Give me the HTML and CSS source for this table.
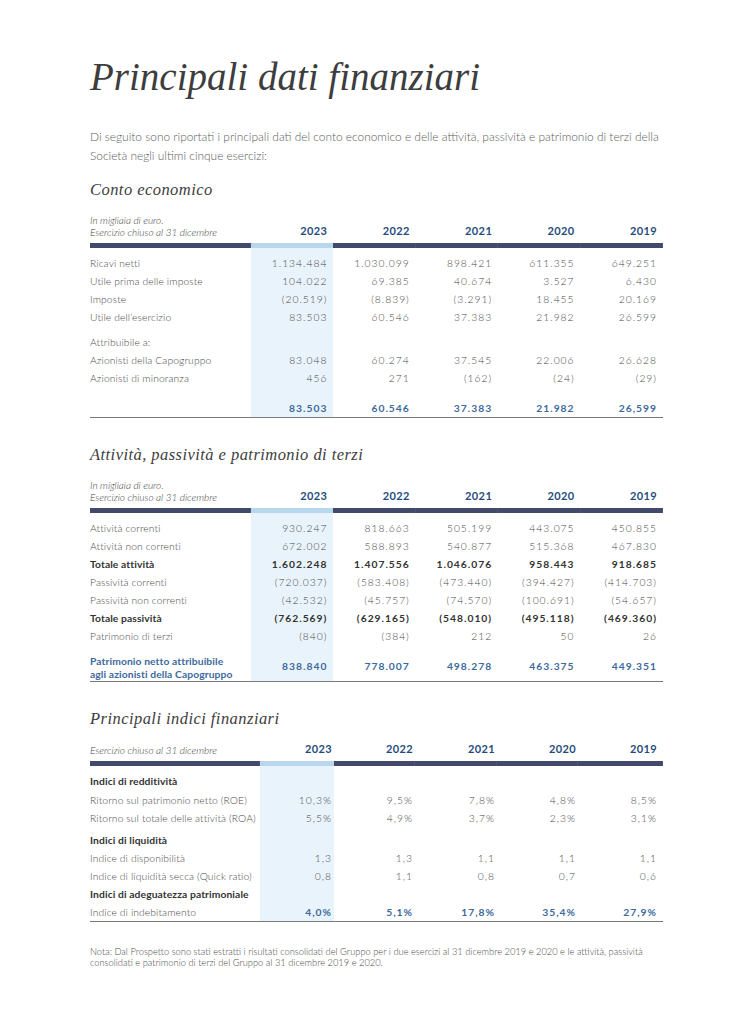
FILE: index.html
```html
<!DOCTYPE html>
<html lang="it">
<head>
<meta charset="utf-8">
<title>Principali dati finanziari</title>
<link rel="stylesheet" href="styles.css">
</head>
<body>
<main class="page">
  <h1 class="title">Principali dati finanziari</h1>
  <p class="intro">Di seguito sono riportati i principali dati del conto economico e delle attività, passività e patrimonio di terzi della Società negli ultimi cinque esercizi:</p>

  <h2 class="section">Conto economico</h2>
  <table class="fin">
    <colgroup><col class="c-label"><col class="c-year"><col class="c-year"><col class="c-year"><col class="c-year"><col class="c-year"></colgroup>
    <thead>
      <tr class="head">
        <th class="lbl"><span>In migliaia di euro.</span><span>Esercizio chiuso al 31 dicembre</span></th>
        <th>2023</th><th>2022</th><th>2021</th><th>2020</th><th>2019</th>
      </tr>
      <tr class="bar"><td></td><td class="hl"></td><td></td><td></td><td></td><td></td></tr>
    </thead>
    <tbody>
      <tr class="gap6"><td></td><td class="hlc"></td><td colspan="4"></td></tr>
      <tr><td>Ricavi netti</td><td class="hlc">1.134.484</td><td>1.030.099</td><td>898.421</td><td>611.355</td><td>649.251</td></tr>
      <tr><td>Utile prima delle imposte</td><td class="hlc">104.022</td><td>69.385</td><td>40.674</td><td>3.527</td><td>6.430</td></tr>
      <tr><td>Imposte</td><td class="hlc">(20.519)</td><td>(8.839)</td><td>(3.291)</td><td>18.455</td><td>20.169</td></tr>
      <tr><td>Utile dell’esercizio</td><td class="hlc">83.503</td><td>60.546</td><td>37.383</td><td>21.982</td><td>26.599</td></tr>
      <tr class="gap7"><td></td><td class="hlc"></td><td colspan="4"></td></tr>
      <tr><td>Attribuibile a:</td><td class="hlc"></td><td></td><td></td><td></td><td></td></tr>
      <tr><td>Azionisti della Capogruppo</td><td class="hlc">83.048</td><td>60.274</td><td>37.545</td><td>22.006</td><td>26.628</td></tr>
      <tr><td>Azionisti di minoranza</td><td class="hlc">456</td><td>271</td><td>(162)</td><td>(24)</td><td>(29)</td></tr>
      <tr class="gap12"><td></td><td class="hlc"></td><td colspan="4"></td></tr>
      <tr class="total last"><td></td><td class="hlc">83.503</td><td>60.546</td><td>37.383</td><td>21.982</td><td>26,599</td></tr>
    </tbody>
  </table>

  <h2 class="section s2">Attività, passività e patrimonio di terzi</h2>
  <table class="fin">
    <colgroup><col class="c-label"><col class="c-year"><col class="c-year"><col class="c-year"><col class="c-year"><col class="c-year"></colgroup>
    <thead>
      <tr class="head">
        <th class="lbl"><span>In migliaia di euro.</span><span>Esercizio chiuso al 31 dicembre</span></th>
        <th>2023</th><th>2022</th><th>2021</th><th>2020</th><th>2019</th>
      </tr>
      <tr class="bar"><td></td><td class="hl"></td><td></td><td></td><td></td><td></td></tr>
    </thead>
    <tbody>
      <tr class="gap6"><td></td><td class="hlc"></td><td colspan="4"></td></tr>
      <tr><td>Attività correnti</td><td class="hlc">930.247</td><td>818.663</td><td>505.199</td><td>443.075</td><td>450.855</td></tr>
      <tr><td>Attività non correnti</td><td class="hlc">672.002</td><td>588.893</td><td>540.877</td><td>515.368</td><td>467.830</td></tr>
      <tr class="strong"><td>Totale attività</td><td class="hlc">1.602.248</td><td>1.407.556</td><td>1.046.076</td><td>958.443</td><td>918.685</td></tr>
      <tr><td>Passività correnti</td><td class="hlc">(720.037)</td><td>(583.408)</td><td>(473.440)</td><td>(394.427)</td><td>(414.703)</td></tr>
      <tr><td>Passività non correnti</td><td class="hlc">(42.532)</td><td>(45.757)</td><td>(74.570)</td><td>(100.691)</td><td>(54.657)</td></tr>
      <tr class="strong"><td>Totale passività</td><td class="hlc">(762.569)</td><td>(629.165)</td><td>(548.010)</td><td>(495.118)</td><td>(469.360)</td></tr>
      <tr><td>Patrimonio di terzi</td><td class="hlc">(840)</td><td>(384)</td><td>212</td><td>50</td><td>26</td></tr>
      <tr class="total two last"><td>Patrimonio netto attribuibile<br>agli azionisti della Capogruppo</td><td class="hlc">838.840</td><td>778.007</td><td>498.278</td><td>463.375</td><td>449.351</td></tr>
    </tbody>
  </table>

  <h2 class="section s3">Principali indici finanziari</h2>
  <table class="fin ratios">
    <colgroup><col class="r-label"><col class="r-2023"><col class="r-2022"><col class="r-2021"><col class="r-2020"><col class="r-2019"></colgroup>
    <thead>
      <tr class="head">
        <th class="lbl"><span>Esercizio chiuso al 31 dicembre</span></th>
        <th>2023</th><th>2022</th><th>2021</th><th>2020</th><th>2019</th>
      </tr>
      <tr class="bar"><td></td><td class="hl"></td><td></td><td></td><td></td><td></td></tr>
    </thead>
    <tbody>
      <tr class="gap6"><td></td><td class="hlc"></td><td colspan="4"></td></tr>
      <tr class="group first"><td>Indici di redditività</td><td class="hlc"></td><td></td><td></td><td></td><td></td></tr>
      <tr><td>Ritorno sul patrimonio netto (ROE)</td><td class="hlc">10,3%</td><td>9,5%</td><td>7,8%</td><td>4,8%</td><td>8,5%</td></tr>
      <tr><td>Ritorno sul totale delle attività (ROA)</td><td class="hlc">5,5%</td><td>4,9%</td><td>3,7%</td><td>2,3%</td><td>3,1%</td></tr>
      <tr class="group tall"><td>Indici di liquidità</td><td class="hlc"></td><td></td><td></td><td></td><td></td></tr>
      <tr><td>Indice di disponibilità</td><td class="hlc">1,3</td><td>1,3</td><td>1,1</td><td>1,1</td><td>1,1</td></tr>
      <tr><td>Indice di liquidità secca (Quick ratio)</td><td class="hlc">0,8</td><td>1,1</td><td>0,8</td><td>0,7</td><td>0,6</td></tr>
      <tr class="group"><td>Indici di adeguatezza patrimoniale</td><td class="hlc"></td><td></td><td></td><td></td><td></td></tr>
      <tr class="total plain last"><td>Indice di indebitamento</td><td class="hlc">4,0%</td><td>5,1%</td><td>17,8%</td><td>35,4%</td><td>27,9%</td></tr>
    </tbody>
  </table>

  <p class="note">Nota: Dal Prospetto sono stati estratti i risultati consolidati del Gruppo per i due esercizi al 31 dicembre 2019 e 2020 e le attività, passività consolidati e patrimonio di terzi del Gruppo al 31 dicembre 2019 e 2020.</p>
</main>
</body>
</html>
```

FILE: styles.css
```css
html, body {
  margin: 0;
  padding: 0;
  background: #ffffff;
}

.page {
  width: 573px;
  padding: 55px 92px 40px 90px;
  font-family: Lato, "Open Sans", "Liberation Sans", sans-serif;
  color: #4a4a4a;
}

.title {
  margin: 0;
  font-family: "Liberation Serif", "DejaVu Serif", serif;
  font-style: italic;
  font-weight: normal;
  font-size: 39px;
  line-height: 44px;
  color: #3d3d3d;
  letter-spacing: 0;
}

.intro {
  margin: 28px 0 0 0;
  font-size: 11.9px;
  font-weight: 300;
  line-height: 19px;
  color: #5e5e5e;
}

.section {
  margin: 14px 0 0 0;
  font-family: "Liberation Serif", "DejaVu Serif", serif;
  font-style: italic;
  font-weight: normal;
  font-size: 16.5px;
  line-height: 22px;
  color: #3d3d3d;
  letter-spacing: 0.45px;
}

.section.s2 { margin-top: 26px; }
.section.s3 { margin-top: 26px; }

.fin {
  width: 573px;
  margin-top: 13px;
  border-collapse: collapse;
  table-layout: fixed;
  font-size: 10.3px;
  font-weight: 300;
}

.fin.ratios { margin-top: 12px; }

.c-label { width: 161px; }
.c-year { width: 82.4px; }

.r-label { width: 170px; }
.r-2023 { width: 74px; }
.r-2022 { width: 81px; }
.r-2021 { width: 82px; }
.r-2020 { width: 81px; }
.r-2019 { width: 85px; }

.fin td, .fin th {
  padding: 0 6px 0 0;
  text-align: right;
  white-space: nowrap;
  letter-spacing: 1px;
  color: #4a4a4a;
  height: 18px;
  line-height: 18px;
}

.fin td:first-child, .fin th:first-child {
  text-align: left;
  padding: 0;
  letter-spacing: 0.1px;
}

.ratios td:nth-child(n+2):nth-child(-n+5),
.ratios th:nth-child(n+2):nth-child(-n+5) {
  padding-right: 2px;
}

.head th {
  height: auto;
  font-size: 11px;
  font-weight: 700;
  letter-spacing: 0.4px;
  color: #1f4c7c;
  vertical-align: bottom;
  line-height: 14px;
  padding-bottom: 5px;
}

.fin .head th.lbl {
  font-size: 10px;
  font-style: italic;
  font-weight: 300;
  color: #3e3e3e;
  line-height: 12px;
  letter-spacing: 0;
  padding-bottom: 5px;
}

.head th.lbl span { display: block; }

.bar td {
  height: 5px;
  line-height: 0;
  padding: 0;
  background: #424a6b;
  box-shadow: inset -1px 0 0 #4d5577;
}

.bar td.hl {
  background: #b9d7ec;
  box-shadow: none;
}

.fin td.hlc {
  background: #e9f3fb;
}

tr.gap6 td { height: 6px; line-height: 0; }
tr.gap7 td { height: 7px; line-height: 0; }
tr.gap12 td { height: 12px; line-height: 0; }

tr.strong td {
  font-weight: 700;
  color: #333333;
}

tr.total td {
  font-weight: 700;
  color: #3d6a9d;
}

tr.total.plain td:first-child {
  font-weight: 300;
  color: #4a4a4a;
}

tr.last td {
  border-bottom: 1.5px solid #7a7a7a;
}

tr.two td {
  height: 28px;
  line-height: 13px;
  vertical-align: bottom;
  padding-bottom: 8px;
}

tr.group td:first-child {
  font-weight: 700;
  color: #333333;
}

tr.group.first td {
  height: 19px;
  vertical-align: top;
}

tr.group.tall td {
  height: 22px;
  vertical-align: bottom;
}

.note {
  margin: 24px 0 0 0;
  font-size: 9.3px;
  font-weight: 300;
  line-height: 11px;
  color: #4a4a4a;
}
```
